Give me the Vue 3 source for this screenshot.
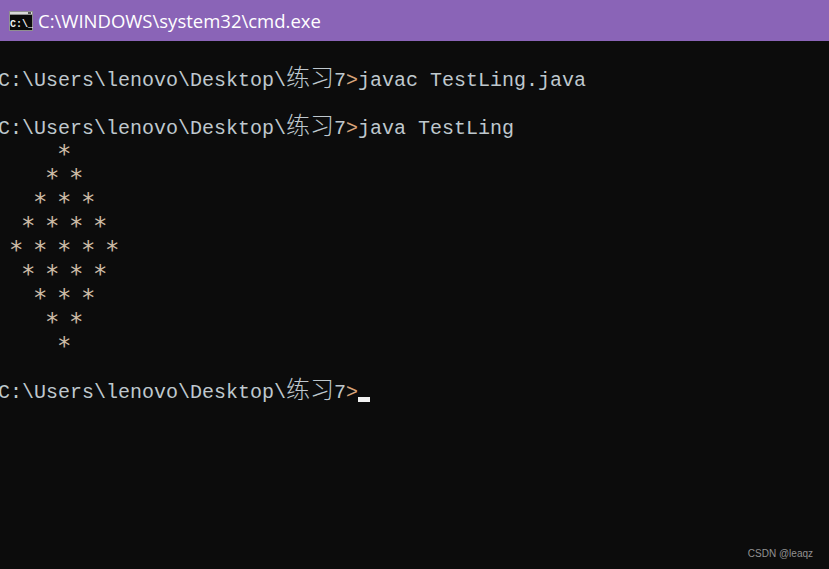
<script setup>
const prompt = 'C:\\Users\\lenovo\\Desktop\\'
const stars = ['     *', '    * *', '   * * *', '  * * * *', ' * * * * *', '  * * * *', '   * * *', '    * *', '     *']
</script>

<template>
  <div class="window">
    <header class="titlebar">
      <svg class="app-icon" width="24" height="20" viewBox="0 0 24 20">
        <rect x="0" y="0" width="24" height="20" fill="#8f8f8f" />
        <rect x="1" y="1" width="22" height="2" fill="#d8d8d8" />
        <rect x="19" y="1" width="3" height="2" fill="#555" />
        <rect x="1" y="4" width="22" height="15" fill="#0a0a0a" />
        <text x="1" y="15.5" class="icon-text">C:\_</text>
      </svg>
      <span class="title">C:\WINDOWS\system32\cmd.exe</span>
    </header>
    <main class="console">
      <div class="output">
        <div class="row"></div>
        <div class="row">{{ prompt }}<span class="cjk">练习</span>7<span class="gt">&gt;</span>javac TestLing.java</div>
        <div class="row"></div>
        <div class="row">{{ prompt }}<span class="cjk">练习</span>7<span class="gt">&gt;</span>java TestLing</div>
        <div v-for="(row, i) in stars" :key="i" class="row star">{{ row }}</div>
        <div class="row"></div>
        <div class="row">{{ prompt }}<span class="cjk">练习</span>7<span class="gt">&gt;</span><span class="cursor"></span></div>
      </div>
      <span class="watermark">CSDN @leaqz</span>
    </main>
  </div>
</template>

<style>
html, body { margin: 0; background: #0c0c0c; }
</style>

<style scoped>
.window {
  width: 829px;
  height: 569px;
  display: flex;
  flex-direction: column;
  overflow: hidden;
  background: #0c0c0c;
}
.titlebar {
  height: 41px;
  flex: none;
  display: flex;
  align-items: center;
  gap: 5px;
  padding-left: 9px;
  background: #8a64b7;
  color: #fff;
}
.app-icon { flex: none; }
.icon-text {
  font-family: "Liberation Mono", monospace;
  font-size: 10px;
  font-weight: 700;
  fill: #f0f0f0;
}
.title {
  font-family: "Open Sans", sans-serif;
  font-size: 18.5px;
  white-space: nowrap;
}
.console {
  position: relative;
  flex: 1;
  padding-top: 3px;
}
.output {
  margin-left: -2px;
  font-family: "Liberation Mono", monospace;
  font-size: 20px;
  color: #bfc8ce;
}
.row {
  height: 24px;
  line-height: 16px;
  white-space: pre;
}
.star {
  box-sizing: border-box;
  padding-top: 5px;
  font-family: "DejaVu Sans Mono", monospace;
  font-size: 24px;
  letter-spacing: -2.45px;
  line-height: 18px;
  margin-left: -1px;
  color: #cdbba6;
}
.gt {
  color: #d8a47a;
}
.cjk {
  font-family: "Noto Sans CJK SC", sans-serif;
  font-size: 24px;
  font-weight: 300;
  line-height: 16px;
}
.cursor {
  display: inline-block;
  width: 12px;
  height: 5px;
  background: #f2f2f2;
  vertical-align: -4px;
}
.watermark {
  position: absolute;
  right: 16px;
  bottom: 10px;
  font-family: "Liberation Sans", sans-serif;
  font-size: 10px;
  color: #929292;
}
</style>
